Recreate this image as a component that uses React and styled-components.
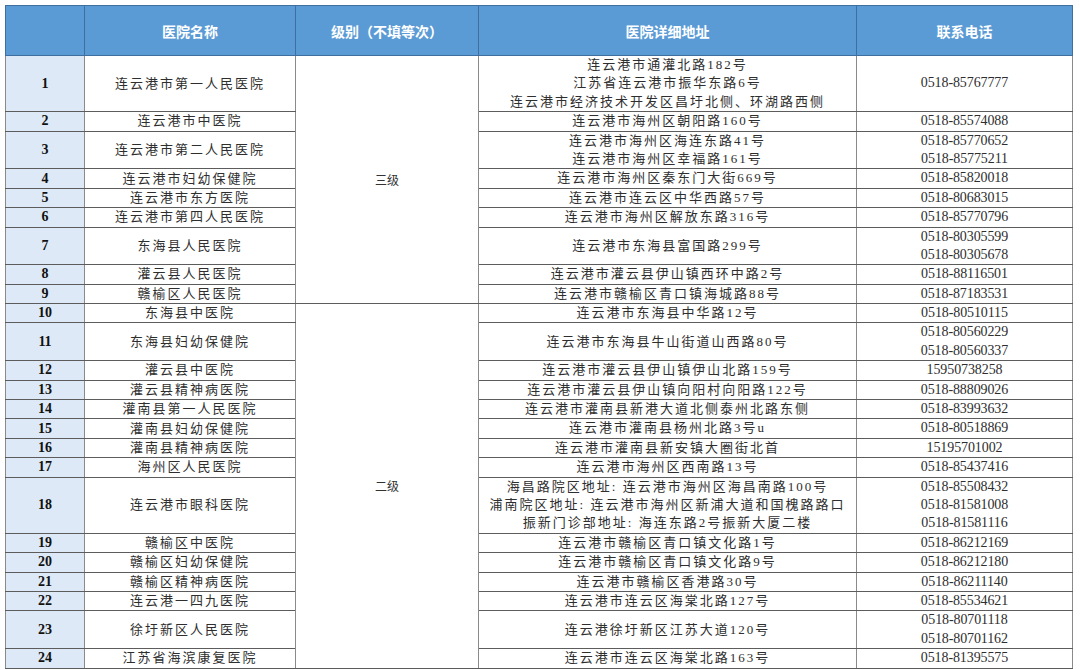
import React from 'react';
import styled, { createGlobalStyle } from 'styled-components';

const LINE = 19.06;

const COLORS = {
  header: '#5b9bd5',
  headerLine: '#3e6f9e',
  index: '#dde9f6',
  line: '#5c5c5c',
  text: '#2e2e2e',
};

const rows = [
  { name: '连云港市第一人民医院', addr: ['连云港市通灌北路182号', '江苏省连云港市振华东路6号', '连云港市经济技术开发区昌圩北侧、环湖路西侧'], phone: ['0518-85767777'] },
  { name: '连云港市中医院', addr: ['连云港市海州区朝阳路160号'], phone: ['0518-85574088'] },
  { name: '连云港市第二人民医院', addr: ['连云港市海州区海连东路41号', '连云港市海州区幸福路161号'], phone: ['0518-85770652', '0518-85775211'] },
  { name: '连云港市妇幼保健院', addr: ['连云港市海州区秦东门大街669号'], phone: ['0518-85820018'] },
  { name: '连云港市东方医院', addr: ['连云港市连云区中华西路57号'], phone: ['0518-80683015'] },
  { name: '连云港市第四人民医院', addr: ['连云港市海州区解放东路316号'], phone: ['0518-85770796'] },
  { name: '东海县人民医院', addr: ['连云港市东海县富国路299号'], phone: ['0518-80305599', '0518-80305678'] },
  { name: '灌云县人民医院', addr: ['连云港市灌云县伊山镇西环中路2号'], phone: ['0518-88116501'] },
  { name: '赣榆区人民医院', addr: ['连云港市赣榆区青口镇海城路88号'], phone: ['0518-87183531'] },
  { name: '东海县中医院', addr: ['连云港市东海县中华路12号'], phone: ['0518-80510115'] },
  { name: '东海县妇幼保健院', addr: ['连云港市东海县牛山街道山西路80号'], phone: ['0518-80560229', '0518-80560337'] },
  { name: '灌云县中医院', addr: ['连云港市灌云县伊山镇伊山北路159号'], phone: ['15950738258'] },
  { name: '灌云县精神病医院', addr: ['连云港市灌云县伊山镇向阳村向阳路122号'], phone: ['0518-88809026'] },
  { name: '灌南县第一人民医院', addr: ['连云港市灌南县新港大道北侧泰州北路东侧'], phone: ['0518-83993632'] },
  { name: '灌南县妇幼保健院', addr: ['连云港市灌南县杨州北路3号u'], phone: ['0518-80518869'] },
  { name: '灌南县精神病医院', addr: ['连云港市灌南县新安镇大圈街北首'], phone: ['15195701002'] },
  { name: '海州区人民医院', addr: ['连云港市海州区西南路13号'], phone: ['0518-85437416'] },
  { name: '连云港市眼科医院', addr: ['海昌路院区地址: 连云港市海州区海昌南路100号', '浦南院区地址: 连云港市海州区新浦大道和国槐路路口', '振新门诊部地址: 海连东路2号振新大厦二楼'], phone: ['0518-85508432', '0518-81581008', '0518-81581116'] },
  { name: '赣榆区中医院', addr: ['连云港市赣榆区青口镇文化路1号'], phone: ['0518-86212169'] },
  { name: '赣榆区妇幼保健院', addr: ['连云港市赣榆区青口镇文化路9号'], phone: ['0518-86212180'] },
  { name: '赣榆区精神病医院', addr: ['连云港市赣榆区香港路30号'], phone: ['0518-86211140'] },
  { name: '连云港一四九医院', addr: ['连云港市连云区海棠北路127号'], phone: ['0518-85534621'] },
  { name: '徐圩新区人民医院', addr: ['连云港徐圩新区江苏大道120号'], phone: ['0518-80701118', '0518-80701162'] },
  { name: '江苏省海滨康复医院', addr: ['连云港市连云区海棠北路163号'], phone: ['0518-81395575'] },
];

const GROUPS = [
  { from: 0, count: 9, label: '三级' },
  { from: 9, count: 15, label: '二级' },
];

const GlobalStyle = createGlobalStyle`
  html, body {
    margin: 0;
    background: #ffffff;
  }
`;

const Page = styled.div`
  padding: 5px 0 0 5px;
  width: 1080px;
  height: 670px;
  box-sizing: border-box;
  overflow: hidden;
`;

const Table = styled.table`
  width: 1067px;
  table-layout: fixed;
  border-collapse: collapse;
  border: 1px solid #707070;
  font-family: 'Liberation Serif', 'Noto Sans CJK SC', serif;
  color: ${COLORS.text};
`;

const HeadCell = styled.th`
  height: 49px;
  padding: 0;
  background: ${COLORS.header};
  border: 1px solid ${COLORS.headerLine};
  color: #ffffff;
  font-family: 'Noto Sans CJK SC', sans-serif;
  font-size: 14px;
  font-weight: 700;
  text-align: center;
`;

const Row = styled.tr`
  height: ${p => p.$lines * LINE - 1}px;
`;

const Cell = styled.td`
  padding: 0;
  border: 1px solid ${COLORS.line};
  border-left-color: #8a8a8a;
  border-right-color: #8a8a8a;
  text-align: center;
  vertical-align: middle;
  font-size: 13px;
  line-height: 18px;
  white-space: nowrap;
  overflow: hidden;
`;

const IndexCell = styled(Cell)`
  background: ${COLORS.index};
  font-size: 14px;
  font-weight: 700;
  color: #111111;
`;

const NameCell = styled(Cell)`
  letter-spacing: 2px;
`;

const LevelCell = styled(Cell)`
  font-family: 'Noto Sans CJK SC', sans-serif;
  font-size: 12px;
  color: #333333;
`;

const PhoneCell = styled(Cell)`
  font-size: 14px;
  letter-spacing: -0.1px;
`;

const Line = styled.div`
  height: 18.4px;
  line-height: 18.4px;
`;

const AddrLine = styled(Line)`
  letter-spacing: 2px;
`;

const App = () => {
  return (
    <Page>
      <GlobalStyle />
      <Table>
        <colgroup>
          <col style={{ width: 79 }} />
          <col style={{ width: 211 }} />
          <col style={{ width: 183 }} />
          <col style={{ width: 378 }} />
          <col style={{ width: 216 }} />
        </colgroup>
        <thead>
          <tr>
            <HeadCell />
            <HeadCell>医院名称</HeadCell>
            <HeadCell>级别（不填等次）</HeadCell>
            <HeadCell>医院详细地址</HeadCell>
            <HeadCell>联系电话</HeadCell>
          </tr>
        </thead>
        <tbody>
          {rows.map((row, i) => {
            const lines = Math.max(row.addr.length, row.phone.length);
            const group = GROUPS.find(g => g.from === i);
            return (
              <Row key={i} $lines={lines}>
                <IndexCell>{i + 1}</IndexCell>
                <NameCell>{row.name}</NameCell>
                {group && (
                  <LevelCell rowSpan={group.count}>{group.label}</LevelCell>
                )}
                <Cell>
                  {row.addr.map(a => (
                    <AddrLine key={a}>{a}</AddrLine>
                  ))}
                </Cell>
                <PhoneCell>
                  {row.phone.map(p => (
                    <Line key={p}>{p}</Line>
                  ))}
                </PhoneCell>
              </Row>
            );
          })}
        </tbody>
      </Table>
    </Page>
  );
};

export default App;
